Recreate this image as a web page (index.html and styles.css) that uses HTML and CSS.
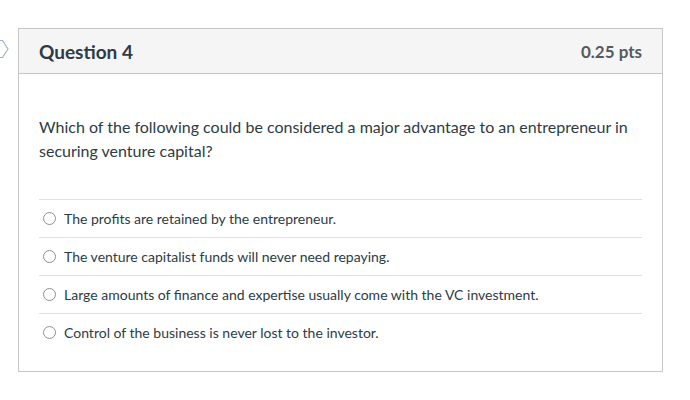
FILE: index.html
```html
<!DOCTYPE html>
<html>
<head>
<meta charset="utf-8">
<link rel="stylesheet" href="styles.css">
</head>
<body>
<div class="page">
  <div class="marker">
    <svg width="10" height="20" viewBox="0 0 10 20"><path d="M-6 1.5 H2.5 L8 10 L2.5 18.5 H-6" fill="none" stroke="#9db3c8" stroke-width="1.2"/></svg>
  </div>
  <div class="card">
    <div class="header">
      <span class="title">Question 4</span>
      <span class="pts">0.25 pts</span>
    </div>
    <div class="body">
      <p class="question">Which of the following could be considered a major advantage to an entrepreneur in securing venture capital?</p>
      <div class="answers">
        <label class="answer"><span class="radio"></span><span>The profits are retained by the entrepreneur.</span></label>
        <label class="answer"><span class="radio"></span><span>The venture capitalist funds will never need repaying.</span></label>
        <label class="answer"><span class="radio"></span><span>Large amounts of finance and expertise usually come with the VC investment.</span></label>
        <label class="answer"><span class="radio"></span><span>Control of the business is never lost to the investor.</span></label>
      </div>
    </div>
  </div>
</div>
</body>
</html>
```
FILE: styles.css
```css
html, body { margin: 0; padding: 0; background: #fff; }
body { font-family: Lato, "Open Sans", sans-serif; color: #2d3b45; }
.page { position: relative; padding: 28px 0 0 18px; }
.marker { position: absolute; left: 0; top: 39px; }
.marker svg { display: block; }
.card { width: 643px; border: 1px solid #c4c8cb; }
.header {
  height: 44px; background: #f5f5f5; border-bottom: 1px solid #c4c8cb;
  display: flex; align-items: center; justify-content: space-between;
  padding: 0 20px;
}
.title { font-weight: 700; font-size: 19px; color: #2d3b45; }
.pts { font-weight: 700; font-size: 17px; color: #565a5c; }
.body { padding: 41px 20px 20px; }
.question { margin: 0 0 36px; font-size: 16px; line-height: 24px; }
.answer {
  display: flex; align-items: center; height: 37px;
  border-top: 1px solid #dfe2e4; font-size: 14px; padding-left: 4px;
  padding-bottom: 1px; box-sizing: border-box; height: 38px;
}
.radio {
  width: 11px; height: 11px; border: 1px solid #8a9197; border-radius: 50%;
  margin-right: 8px; flex: none; background: #fff;
}
```
